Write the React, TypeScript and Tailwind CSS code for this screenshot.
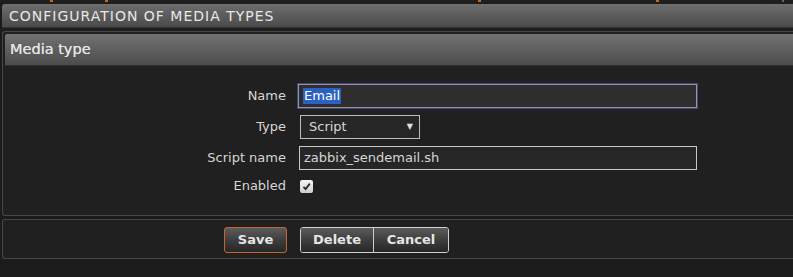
import React from "react";

const font = { fontFamily: '"DejaVu Sans", Verdana, sans-serif' };

export default function App() {
  return (
    <div className="w-[793px] h-[277px] bg-[#1b1b1b] overflow-hidden text-[#dcdcdc]" style={font}>
      {/* top strip with orange marks */}
      <div className="relative h-[4px] bg-[#1e1e1e]">
        <span className="absolute left-[50px] top-0 w-[3px] h-[2px] bg-[#c8641e]" />
        <span className="absolute left-[105px] top-0 w-[3px] h-[2px] bg-[#c8641e]" />
        <span className="absolute left-[478px] top-0 w-[3px] h-[2px] bg-[#c8641e]" />
        <span className="absolute left-[656px] top-0 w-[3px] h-[2px] bg-[#c8641e]" />
        <span className="absolute left-[782px] top-0 w-[2px] h-[2px] bg-[#8a5a3a]" />
      </div>
      {/* title bar */}
      <div className="ml-[2px] h-[24px] rounded-tl-[3px] bg-gradient-to-b from-[#6e6e6e] to-[#4b4b4b] border-b border-[#333] flex items-center pl-[7px]">
        <span className="text-[14px] tracking-[1px] text-[#e8e8e8] leading-none">CONFIGURATION OF MEDIA TYPES</span>
      </div>
      <div className="h-[3px] bg-[#1e1e1e]" />
      {/* main panel */}
      <div className="ml-[2px] h-[185px] bg-[#202020] border-t border-l border-b border-[#474747] rounded-tl-[3px] rounded-bl-[3px] pt-[2px] pl-[2px]">
        <div className="h-[32px] rounded-tl-[2px] bg-gradient-to-b from-[#727272] to-[#4c4c4c] border-b border-[#2e2e2e] flex items-center pl-[5px]">
          <span className="text-[14.5px] text-[#e6e6e6] leading-none [text-shadow:0_0_0.4px_#e6e6e6]">Media type</span>
        </div>
        <div className="pt-[18px] flex flex-col text-[13px] text-[#d6d6d6]">
          <div className="flex items-center h-[24px]">
            <div className="w-[293px] text-right pr-[12px]">Name</div>
            <div className="w-[399px] h-[24px] border border-[#a08eaa] shadow-[0_0_0_1px_#3c4a78] bg-[#2e2e2e] flex items-center pl-[4px]">
              <span className="bg-[#2b62c2] text-white px-[1px] leading-[16px]">Email</span>
            </div>
          </div>
          <div className="flex items-center h-[24px] mt-[7px]">
            <div className="w-[293px] text-right pr-[12px]">Type</div>
            <div className="ml-[2px] w-[120px] h-[24px] border border-[#bdbdbd] bg-[#262626] flex items-center justify-between pl-[8px] pr-[6px]">
              <span>Script</span>
              <span className="text-[8px] text-[#e0e0e0]">▼</span>
            </div>
          </div>
          <div className="flex items-center h-[24px] mt-[7px]">
            <div className="w-[293px] text-right pr-[12px]">Script name</div>
            <div className="ml-[1px] w-[398px] h-[24px] border border-[#c8c8c8] bg-[#262626] flex items-center pl-[4px]">
              zabbix_sendemail.sh
            </div>
          </div>
          <div className="flex items-center h-[24px] mt-[4px]">
            <div className="w-[293px] text-right pr-[12px]">Enabled</div>
            <div className="ml-[2px] w-[13px] h-[13px] rounded-[2px] bg-gradient-to-b from-[#f4f4f4] to-[#cfcfcf] flex items-center justify-center">
              <svg width="9" height="9" viewBox="0 0 9 9">
                <path d="M1.5 4.8 L3.6 7 L7.8 1.6" stroke="#2a2a2a" strokeWidth="1.8" fill="none" />
              </svg>
            </div>
          </div>
        </div>
      </div>
      <div className="h-[3px]" />
      {/* button panel */}
      <div className="ml-[2px] h-[40px] bg-[#202020] border-t border-l border-b border-[#474747] rounded-tl-[3px] rounded-bl-[3px] flex items-center pt-[2px]">
        <div className="ml-[221px] w-[63px] h-[26px] rounded-[3px] border border-[#c7642c] bg-gradient-to-b from-[#5c5c5c] via-[#3e3e3e] to-[#262626] flex items-center justify-center text-[13px] font-bold text-[#e6e6e6]">
          Save
        </div>
        <div className="ml-[13px] flex h-[26px] rounded-[3px] border border-[#cfcfcf] overflow-hidden">
          <div className="w-[73px] bg-gradient-to-b from-[#5c5c5c] via-[#3e3e3e] to-[#262626] flex items-center justify-center text-[13px] font-bold text-[#e6e6e6] border-r border-[#cfcfcf]">
            Delete
          </div>
          <div className="w-[74px] bg-gradient-to-b from-[#5c5c5c] via-[#3e3e3e] to-[#262626] flex items-center justify-center text-[13px] font-bold text-[#e6e6e6]">
            Cancel
          </div>
        </div>
      </div>
    </div>
  );
}
